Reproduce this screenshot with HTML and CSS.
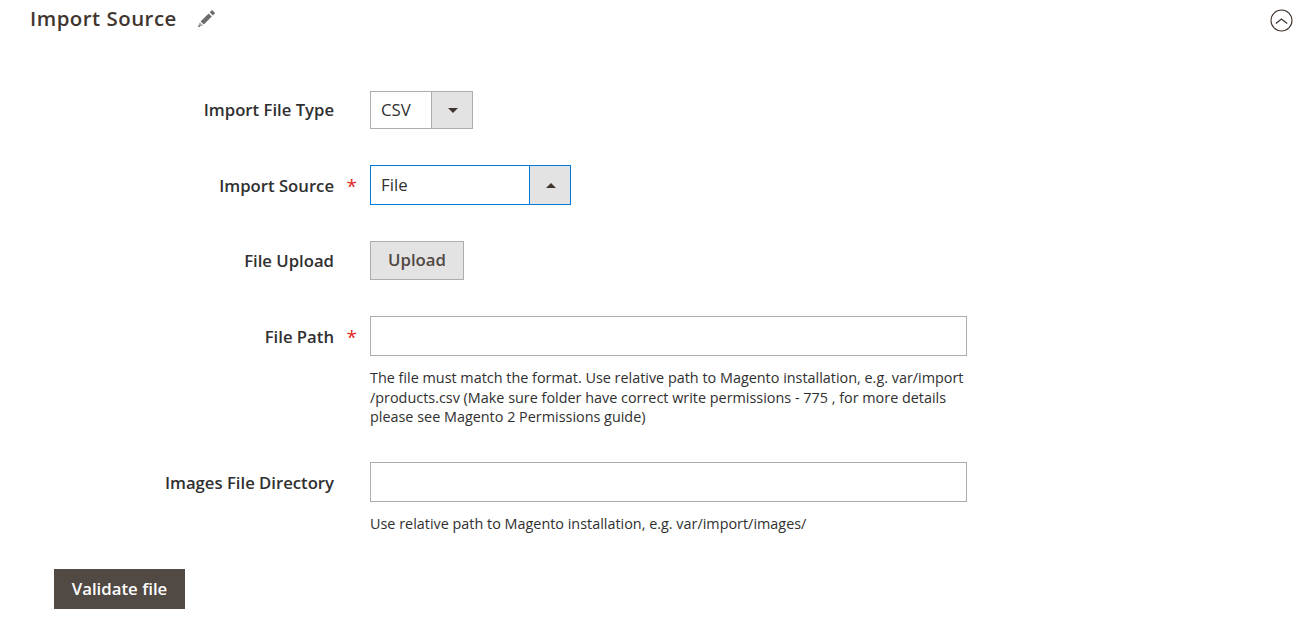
FILE: index.html
```html
<!DOCTYPE html>
<html lang="en">
<head>
<meta charset="utf-8">
<title>Import Source</title>
<link rel="stylesheet" href="styles.css">
</head>
<body>
<section class="page">
  <header class="head">
    <h2 class="title">Import Source</h2>
    <svg class="pencil" width="20" height="20" viewBox="0 0 20 20"><path d="M3.6 12.4L11.6 4.4l3.2 3.2-8 8z M12.7 3.3l1.7-1.7q.6-.6 1.2 0l2 2q.6.6 0 1.2l-1.7 1.7z" fill="#6b6b6b"/><path d="M1.2 18l1.5-4.7 3.2 3.2z" fill="#a3a3a3"/><path d="M1.2 18l.6-2 1.4 1.4z" fill="#555"/></svg>
    <svg class="collapse" width="24" height="24" viewBox="0 0 24 24"><circle cx="11.5" cy="11.5" r="10.5" fill="none" stroke="#41362f" stroke-width="1.1"/><path d="M5.8 14.6l5.7-4.6 5.7 4.6" fill="none" stroke="#41362f" stroke-width="1.3"/></svg>
  </header>
  <form class="form">
    <div class="row row-type">
      <label class="label">Import File Type</label>
      <div class="select select-type"><span class="value">CSV</span><span class="arrow"><i class="tri tri-down"></i></span></div>
    </div>
    <div class="row row-source">
      <label class="label req">Import Source</label>
      <div class="select select-source"><span class="value">File</span><span class="arrow"><i class="tri tri-up"></i></span></div>
    </div>
    <div class="row row-upload">
      <label class="label">File Upload</label>
      <button type="button" class="upload">Upload</button>
    </div>
    <div class="row row-path">
      <label class="label req">File Path</label>
      <div class="field">
        <div class="input"></div>
        <p class="note">The file must match the format. Use relative path to Magento installation, e.g. var/import<br>/products.csv (Make sure folder have correct write permissions - 775 , for more details<br>please see Magento 2 Permissions guide)</p>
      </div>
    </div>
    <div class="row row-images">
      <label class="label">Images File Directory</label>
      <div class="field">
        <div class="input"></div>
        <p class="note">Use relative path to Magento installation, e.g. var/import/images/</p>
      </div>
    </div>
    <button type="button" class="validate">Validate file</button>
  </form>
</section>
</body>
</html>
```
FILE: styles.css
```css
html, body { margin: 0; padding: 0; background: #fff; }
body { font-family: "Open Sans", sans-serif; font-size: 14.4px; color: #303030; overflow: hidden; height: 625px; }
.page { padding: 0 16px 0 30px; }
.head { display: flex; align-items: center; height: 38px; }
.title { margin: 0 0 2px; font-size: 20.4px; font-weight: 600; letter-spacing: 0.5px; color: #41362f; line-height: 36px; }
.pencil { margin-left: 20px; }
.collapse { margin-left: auto; margin-top: 4px; }
.form { padding-top: 53px; }
.row { display: flex; align-items: flex-start; }
.label { width: 304px; text-align: right; font-weight: 600; font-size: 16.7px; color: #303030; margin-right: 36px; position: relative; line-height: 38px; }
.req::after { content: "*"; position: absolute; right: -23px; top: 2px; color: #e22626; font-size: 19px; font-weight: 400; line-height: 38px; }
.row-type { height: 74px; }
.row-source { height: 76px; }
.row-upload { height: 75px; }
.row-path { height: 146px; }
.row-images { height: 107px; }
.row-source .label, .row-path .label, .row-images .label { padding-top: 2px; }
.row-upload .label { padding-top: 1px; }
.select { display: flex; box-sizing: border-box; border: 1px solid #adadad; height: 38px; }
.select-type { width: 103px; }
.select-source { width: 201px; height: 40px; border-color: #007bdb; }
.value { flex: 1; padding-left: 10px; font-size: 16.8px; line-height: 36px; color: #303030; }
.select-source .value { line-height: 38px; }
.arrow { width: 41px; padding-left: 2px; box-sizing: border-box; background: #e3e3e3; border-left: 1px solid #adadad; display: flex; align-items: center; justify-content: center; }
.select-source .arrow { border-left-color: #007bdb; }
.tri { width: 0; height: 0; border-left: 5px solid transparent; border-right: 5px solid transparent; }
.tri-down { border-top: 5px solid #41362f; }
.tri-up { border-bottom: 5px solid #41362f; }
.upload { box-sizing: border-box; width: 94px; height: 39px; border: 1px solid #adadad; background: #e3e3e3; font: 600 16.8px "Open Sans", sans-serif; color: #514943; padding: 0 0 2px; }
.field { width: 597px; }
.input { box-sizing: border-box; height: 40px; border: 1px solid #adadad; background: #fff; }
.note { margin: 12px 0 0; font-size: 14.4px; line-height: 19.5px; color: #303030; }
.validate { display: block; box-sizing: border-box; margin-left: 24px; width: 131px; height: 40px; border: 0; background: #514943; color: #fff; font: 600 16.8px "Open Sans", sans-serif; padding: 0 0 2px; }
```
